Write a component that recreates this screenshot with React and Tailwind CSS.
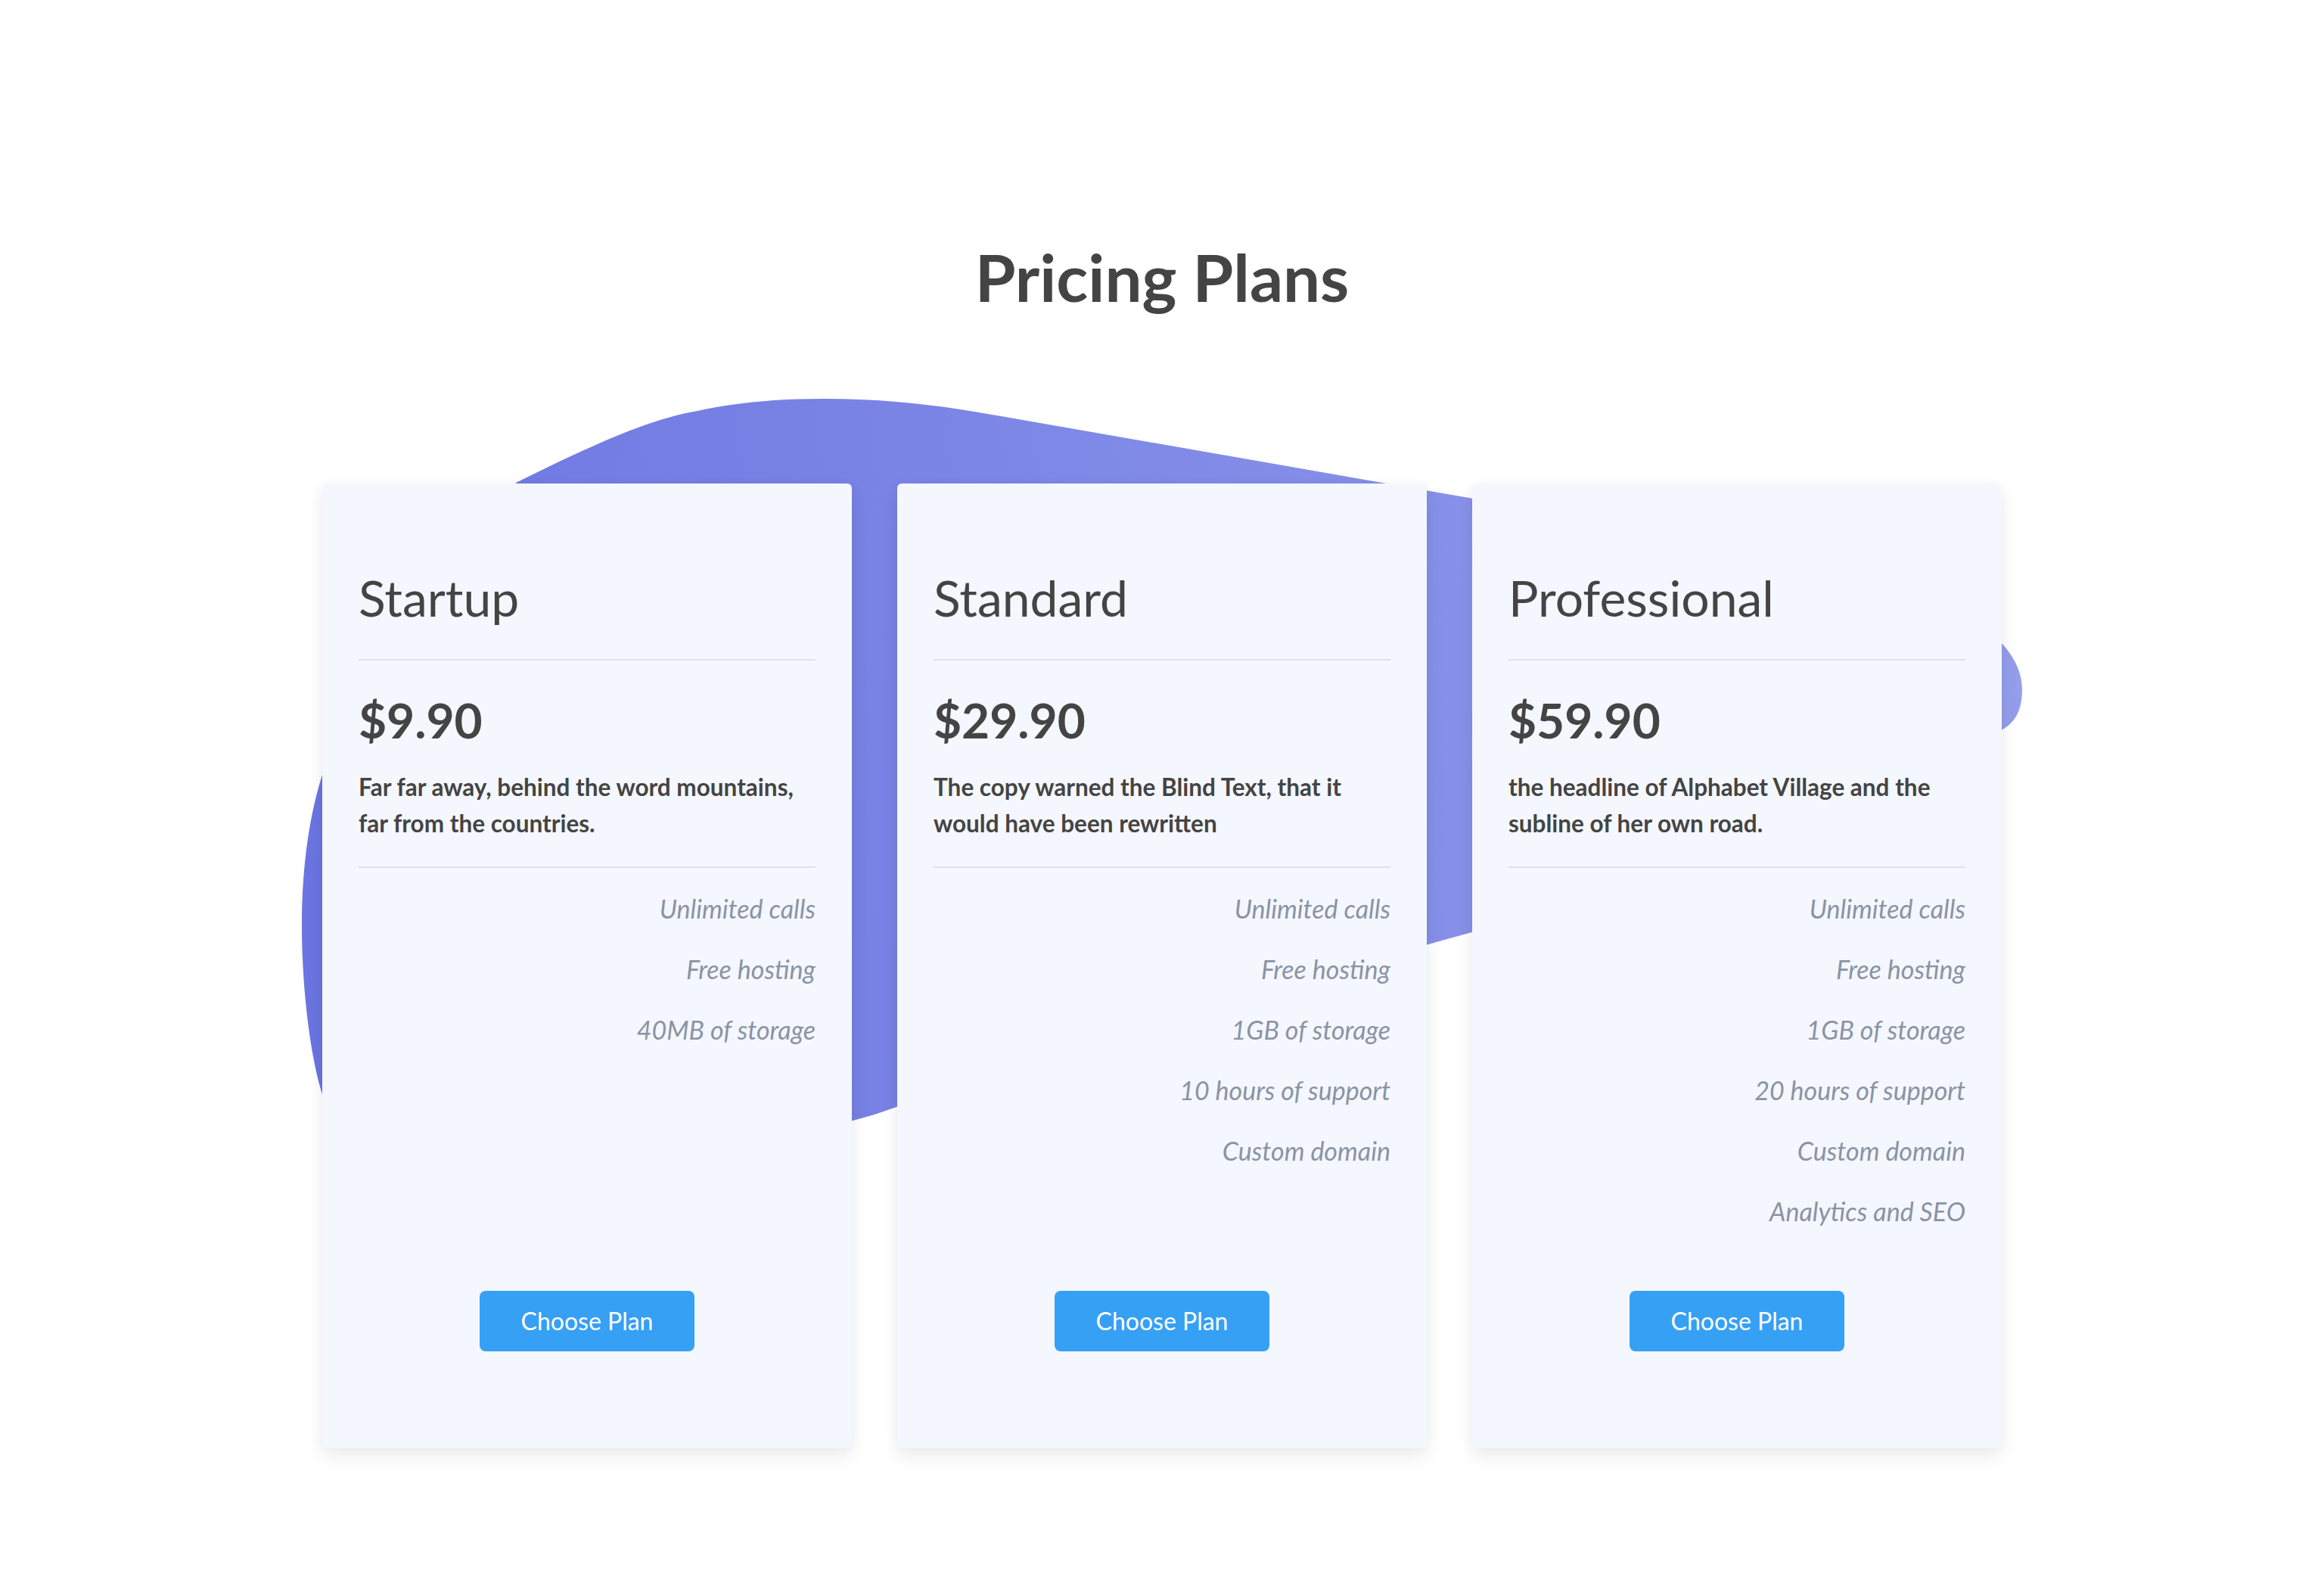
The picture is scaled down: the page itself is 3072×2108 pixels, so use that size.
import React from "react";

const plans = [
  {
    name: "Startup",
    price: "$9.90",
    desc: ["Far far away, behind the word mountains,", "far from the countries."],
    features: ["Unlimited calls", "Free hosting", "40MB of storage"],
  },
  {
    name: "Standard",
    price: "$29.90",
    desc: ["The copy warned the Blind Text, that it", "would have been rewritten"],
    features: ["Unlimited calls", "Free hosting", "1GB of storage", "10 hours of support", "Custom domain"],
  },
  {
    name: "Professional",
    price: "$59.90",
    desc: ["the headline of Alphabet Village and the", "subline of her own road."],
    features: [
      "Unlimited calls",
      "Free hosting",
      "1GB of storage",
      "20 hours of support",
      "Custom domain",
      "Analytics and SEO",
    ],
  },
];

function Blob() {
  return (
    <svg
      className="pointer-events-none absolute left-0 top-0"
      width="3072"
      height="2108"
      viewBox="0 0 3072 2108"
      aria-hidden="true"
    >
      <defs>
        <linearGradient id="blobGrad" gradientUnits="userSpaceOnUse" x1="399" y1="1100" x2="2673" y2="800">
          <stop offset="0" stopColor="#6b75e1" />
          <stop offset="1" stopColor="#949eec" />
        </linearGradient>
      </defs>
      <path
        fill="url(#blobGrad)"
        d="M 1090 527
           C 1170 527 1240 535 1323 550
           L 1942 658
           L 2420 745
           C 2560 772 2673 840 2673 910
           C 2673 945 2660 958 2640 968
           C 2450 1080 2150 1175 1946 1232
           C 1700 1300 1400 1390 1156 1473
           C 950 1535 600 1540 440 1478
           C 415 1440 399 1320 399 1225
           C 399 1140 410 1075 426 1024
           C 480 860 580 705 684 637
           C 760 600 850 555 922 543
           C 980 530 1040 527 1090 527 Z"
      />
    </svg>
  );
}

function Card({ plan }) {
  return (
    <div className="relative z-10 flex w-[700px] flex-col rounded-[6px] bg-[#f4f7fd] px-[48px] pt-[113px] pb-[128px] shadow-[0_12px_24px_rgba(0,0,0,0.07),0_0_16px_rgba(0,0,0,0.03)]">
      <h3 className="text-[66px] leading-[76.8px] font-normal text-[#444444]">{plan.name}</h3>
      <div className="mt-[42px] h-[2px] bg-[#dde1ea]" />
      <div className="mt-[41px] text-[64px] leading-[76.8px] font-bold text-[#444444]">{plan.price}</div>
      <p className="mt-[25px] text-[31.5px] leading-[48px] font-bold text-[#444444]">
        <span className="block whitespace-nowrap">{plan.desc[0]}</span>
        <span className="block whitespace-nowrap">{plan.desc[1]}</span>
      </p>
      <div className="mt-[33px] h-[2px] bg-[#dde1ea]" />
      <ul className="mt-[14px] flex-1 text-right text-[34px] leading-[80px] font-normal italic text-[#8a93a5]">
        {plan.features.map((f) => (
          <li key={f}>{f}</li>
        ))}
      </ul>
      <div className="mt-[65px] flex justify-center">
        <button className="h-[80px] w-[284px] rounded-[8px] bg-[#36a0f5] text-[32px] leading-[80px] text-white">
          Choose Plan
        </button>
      </div>
    </div>
  );
}

export default function App() {
  return (
    <div className="relative min-h-[2108px] w-[3072px] overflow-hidden bg-white font-['Lato',sans-serif]">
      <Blob />
      <div className="relative flex flex-col items-center pt-[311px]">
        <h2 className="text-[87px] leading-[110px] font-bold text-[#444444]">Pricing Plans</h2>
        <div className="mt-[218px] flex gap-[60px]">
          {plans.map((p) => (
            <Card key={p.name} plan={p} />
          ))}
        </div>
      </div>
    </div>
  );
}
